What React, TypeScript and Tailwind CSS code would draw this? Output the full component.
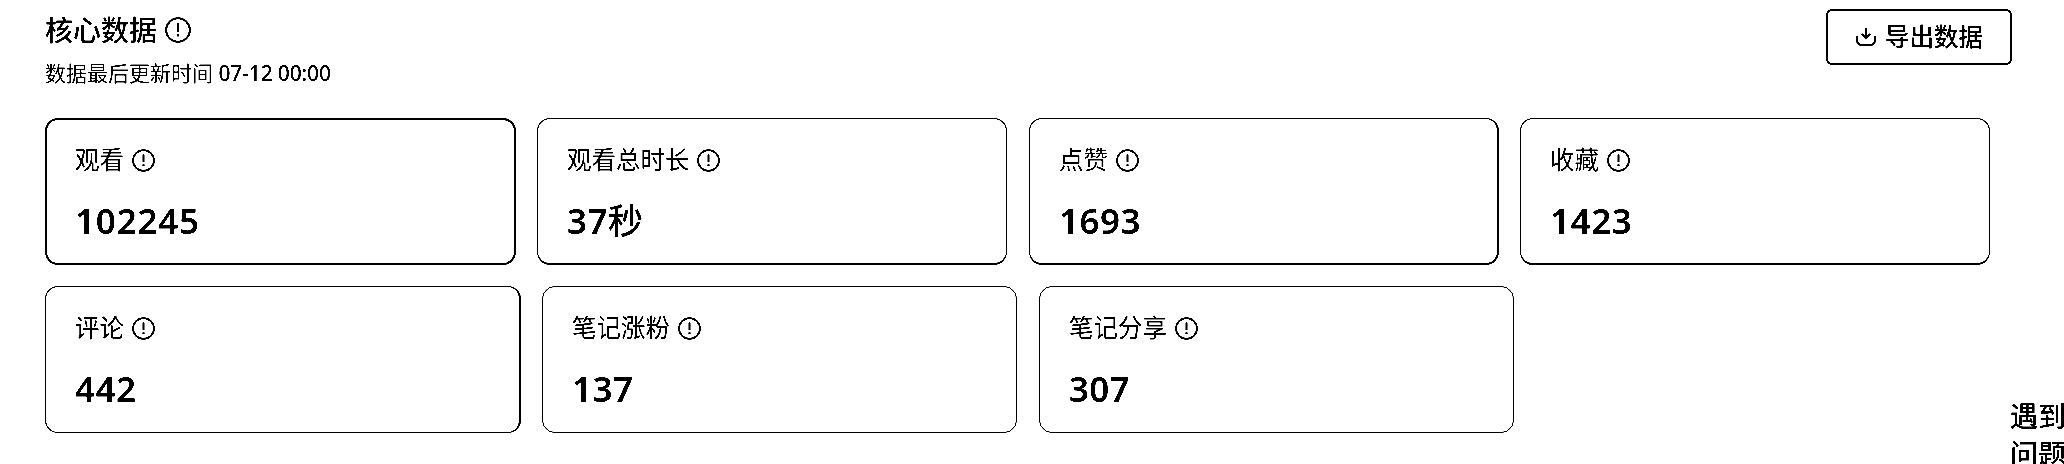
function InfoIcon({ className }: { className: string }) {
  return (
    <svg viewBox="0 0 24 24" fill="none" stroke="currentColor" className={className}>
      <circle cx="12" cy="12" r="10.900" strokeWidth="1.9" />
      <path d="M12 5.600v8" strokeWidth="2.1" />
      <path d="M12 15.800v2.200" strokeWidth="2.2" />
    </svg>
  );
}

function ExportIcon() {
  return (
    <svg viewBox="0 0 20 20" fill="none" stroke="currentColor" strokeWidth="2" className="h-5 w-5 shrink-0">
      <path d="M1.200 9v4.600C1.200 16.200 3 18 5.600 18h8.800c2.600 0 4.400-1.800 4.400-4.400V9" />
      <path d="M10 1v9.800M5.800 7 10 11 14.200 7" />
    </svg>
  );
}

type Metric = { label: string; value: string; unit?: string; frame: string };

const firstRow: Metric[] = [
  { label: "观看", value: "102245", frame: "w-[471px] border-2 pl-7 pt-6 tracking-[0.8px]" },
  { label: "观看总时长", value: "37", unit: "秒", frame: "ml-[21px] w-[470px] border border-b-2 pl-[29px] pt-[25px] tracking-[0.5px]" },
  { label: "点赞", value: "1693", frame: "ml-[22px] w-[470px] border border-b-2 border-r-2 pl-[29px] pt-[25px] tracking-[0.5px]" },
  { label: "收藏", value: "1423", frame: "ml-[21px] w-[470px] border border-b-2 pl-[29px] pt-[25px] tracking-[0.6px]" },
];

const secondRow: Metric[] = [
  { label: "评论", value: "442", frame: "w-[476px] border border-r-2 pl-[29px] pt-[25px] tracking-[0.5px]" },
  { label: "笔记涨粉", value: "137", frame: "ml-[21px] w-[475px] border pl-[29px] pt-[25px] tracking-[0.5px]" },
  { label: "笔记分享", value: "307", frame: "ml-[22px] w-[475px] border pl-[29px] pt-[25px] tracking-[0.2px]" },
];

function Card({ label, value, unit, frame }: Metric) {
  return (
    <div className={`h-[147px] shrink-0 rounded-[13px] border-black ${frame}`}>
      <div className="flex h-8 items-center">
        <span className="text-[24.5px] leading-8 tracking-normal">{label}</span>
        <InfoIcon className="ml-[7.5px] h-[23px] w-[23px] shrink-0" />
      </div>
      <div className="mt-[21px] text-[35px] font-semibold leading-[48px]">
        {value}
        {unit && <span className="font-medium">{unit}</span>}
      </div>
    </div>
  );
}

export default function App() {
  return (
    <div className="relative h-[464px] w-[2064px] overflow-hidden bg-white font-['Noto_Sans','Noto_Sans_CJK_SC',sans-serif] text-black contrast-[6]">
      <header className="flex h-[118px] justify-between pl-[45px] pr-[52px] pt-[9px]">
        <div>
          <div className="flex h-[42px] items-center">
            <h1 className="text-[28px] font-medium leading-[42px]">核心数据</h1>
            <InfoIcon className="ml-[8px] h-[26px] w-[26px] shrink-0" />
          </div>
          <p className="mt-[7px] text-[21px] leading-[30px]">
            数据最后更新时间 <span className="font-medium tracking-[-0.15px]">07-12 00:00</span>
          </p>
        </div>
        <button className="flex h-14 w-[186px] items-center rounded-[6px] border-2 border-black pl-7">
          <ExportIcon />
          <span className="ml-[9px] whitespace-nowrap text-[24.5px] font-medium leading-8">导出数据</span>
        </button>
      </header>
      <section className="flex pl-[45px]">
        {firstRow.map((m) => (
          <Card key={m.label} {...m} />
        ))}
      </section>
      <section className="mt-[21px] flex pl-[45px]">
        {secondRow.map((m) => (
          <Card key={m.label} {...m} />
        ))}
      </section>
      <aside className="absolute left-[2010px] top-[397px] w-[84px] text-[28px] font-medium leading-[38px]">
        <div>遇到</div>
        <div>问题</div>
      </aside>
    </div>
  );
}
